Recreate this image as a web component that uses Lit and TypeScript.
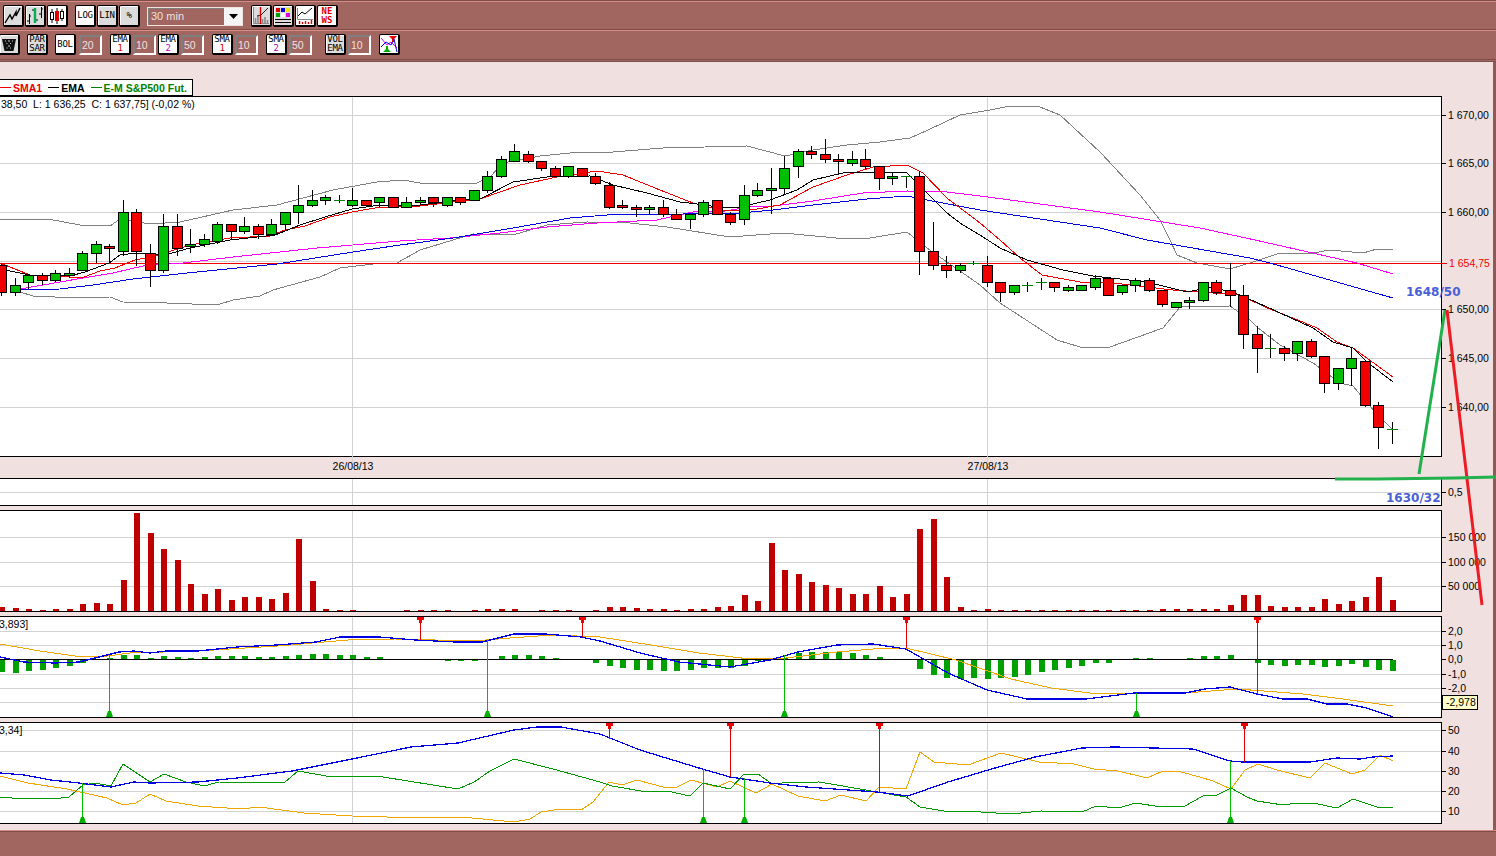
import { LitElement, html, svg, css } from "lit";
import { customElement } from "lit/decorators.js";

type Candle = [number, number, number, number, "g" | "r"];

// body top, body bottom, wick top, wick bottom, colour (page pixels)
const CANDLES: Candle[] = [
  [265, 292, 263, 296, "r"], [285, 292, 278, 296, "g"], [275, 282, 275, 289, "g"], [275, 280, 273, 285, "r"],
  [273, 280, 270, 282, "g"], [273, 275, 268, 278, "g"], [253, 270, 251, 270, "g"], [244, 253, 241, 263, "g"],
  [246, 248, 244, 262, "r"], [212, 251, 200, 256, "g"], [212, 251, 209, 266, "r"], [253, 270, 244, 287, "r"],
  [226, 270, 214, 273, "g"], [226, 248, 214, 256, "r"], [244, 246, 229, 253, "g"], [239, 244, 234, 247, "g"],
  [224, 241, 222, 244, "g"], [224, 231, 224, 239, "r"], [226, 231, 217, 234, "g"], [226, 234, 224, 239, "r"],
  [224, 234, 219, 236, "g"], [212, 224, 212, 231, "g"], [205, 212, 185, 224, "g"], [200, 205, 190, 207, "g"],
  [197, 200, 195, 205, "g"], [200, 200, 195, 203, "g"], [200, 205, 188, 207, "g"], [200, 205, 200, 207, "r"],
  [197, 202, 197, 207, "g"], [197, 207, 197, 207, "r"], [202, 207, 197, 208, "g"], [200, 202, 197, 205, "g"],
  [197, 202, 197, 207, "r"], [197, 205, 197, 207, "g"], [197, 202, 197, 205, "r"], [190, 200, 190, 201, "g"],
  [176, 190, 171, 193, "g"], [159, 176, 156, 178, "g"], [151, 161, 144, 161, "g"], [154, 161, 151, 163, "r"],
  [161, 168, 161, 171, "r"], [168, 176, 166, 176, "r"], [166, 176, 166, 178, "g"], [168, 176, 168, 176, "r"],
  [176, 183, 173, 185, "r"], [185, 207, 182, 209, "r"], [205, 207, 200, 209, "r"], [207, 209, 205, 217, "r"],
  [207, 209, 205, 214, "g"], [207, 214, 200, 217, "r"], [214, 219, 209, 219, "r"], [214, 219, 214, 229, "g"],
  [202, 214, 200, 217, "g"], [200, 214, 200, 214, "r"], [214, 222, 212, 225, "r"], [195, 219, 185, 225, "g"],
  [190, 195, 183, 197, "g"], [188, 190, 168, 214, "g"], [168, 188, 156, 195, "g"], [151, 166, 149, 178, "g"],
  [151, 154, 146, 159, "r"], [154, 159, 139, 163, "r"], [159, 161, 154, 173, "r"], [159, 163, 151, 166, "g"],
  [159, 166, 149, 169, "r"], [166, 178, 166, 190, "r"], [176, 178, 172, 185, "g"], [176, 176, 176, 188, "g"],
  [176, 251, 171, 275, "r"], [251, 265, 222, 270, "r"], [265, 270, 256, 278, "r"], [265, 270, 263, 273, "g"],
  [263, 263, 261, 265, "g"], [265, 282, 256, 287, "r"], [282, 292, 282, 302, "r"], [285, 292, 285, 295, "g"],
  [285, 285, 282, 292, "g"], [282, 282, 278, 290, "g"], [282, 287, 282, 292, "r"], [287, 290, 285, 292, "g"],
  [285, 290, 285, 290, "g"], [278, 287, 275, 290, "g"], [278, 295, 278, 295, "r"], [285, 292, 285, 295, "g"],
  [280, 285, 278, 292, "g"], [280, 290, 278, 292, "r"], [290, 304, 290, 307, "r"], [302, 307, 302, 308, "g"],
  [300, 302, 297, 309, "g"], [282, 300, 282, 302, "g"], [282, 292, 280, 295, "r"], [290, 295, 263, 307, "r"],
  [295, 334, 285, 349, "r"], [334, 348, 326, 373, "r"], [348, 348, 334, 358, "g"], [348, 353, 346, 361, "r"],
  [341, 353, 341, 361, "g"], [341, 356, 339, 358, "r"], [356, 383, 356, 393, "r"], [368, 383, 368, 390, "g"],
  [358, 368, 348, 386, "g"], [361, 405, 361, 407, "r"], [405, 427, 402, 449, "r"], [429, 429, 422, 444, "g"],
];

const VOLUME = [
  4, 3, 2, 1, 2, 2, 7, 8, 7, 31, 98, 78, 62, 51, 27, 17, 22, 11, 14, 14, 12, 18, 72, 30, 2, 1, 1, 0, 0, 0,
  1, 1, 1, 1, 0, 1, 2, 2, 2, 0, 1, 1, 1, 0, 1, 4, 4, 3, 2, 2, 1, 2, 2, 4, 5, 16, 10, 68, 41, 37,
  29, 26, 23, 17, 17, 25, 14, 17, 82, 92, 34, 4, 1, 2, 1, 1, 1, 1, 1, 1, 1, 1, 1, 1, 1, 1, 2, 2, 2, 2,
  2, 6, 16, 16, 5, 4, 4, 4, 12, 7, 10, 14, 34, 11,
];

const MACD_HIST = [
  -12, -13, -11, -10, -8, -6, -3, 0, 1, 4, 4, 1, 3, 2, 1, 2, 3, 3, 3, 2, 2, 3, 4, 5, 5, 4, 4, 2, 2, 0,
  0, 0, 0, -1, -1, -1, 0, 3, 4, 4, 3, 1, 0, 0, -3, -6, -8, -10, -10, -11, -11, -10, -8, -8, -8, -6, -1, 0, 1, 6,
  7, 7, 7, 6, 4, 2, 0, 0, -9, -15, -18, -19, -18, -19, -18, -17, -15, -12, -10, -8, -6, -3, -3, 0, 1, 1, 0, 0, 1, 3,
  3, 4, 0, -3, -5, -6, -5, -5, -7, -6, -4, -7, -10, -11,
];

const BOLL_UP = [0,219,48,219,80,225,110,226,120,219,150,224,180,222,233,210,277,205,333,190,377,182,403,180,420,183,477,183,490,177,503,163,540,156,580,152,613,152,663,148,747,146,785,156,813,150,847,145,880,142,910,138,928,130,960,115,990,110,1010,106,1040,107,1060,115,1100,152,1140,195,1160,220,1170,240,1177,255,1197,263,1230,269,1253,262,1280,253,1313,253,1330,250,1363,253,1377,249,1393,249];
const BOLL_LOW = [20,292,33,296,77,298,110,297,123,302,167,303,217,305,233,300,260,296,273,290,320,277,340,268,373,264,397,263,420,250,453,240,473,234,513,235,547,225,587,222,630,223,667,227,730,237,783,233,847,239,870,238,907,232,927,248,980,285,1000,303,1057,340,1080,347,1110,347,1163,328,1180,307,1230,306,1250,320,1257,327,1280,345,1313,363,1340,383,1353,386,1367,403,1383,420,1393,430];
const MAGENTA = [20,289,43,285,83,278,113,273,143,266,183,263,233,257,317,248,400,241,450,238,500,233,547,227,597,223,657,220,693,212,725,211,750,207,773,206,813,201,863,193,907,191,947,192,980,196,1100,212,1200,228,1255,240,1357,263,1393,274];
const BLUE = [20,290,60,289,93,285,133,279,187,273,277,264,353,252,400,245,453,238,513,228,570,218,607,215,683,214,740,213,773,210,813,205,867,199,907,196,927,200,980,210,1100,228,1147,240,1250,258,1270,263,1393,298];
const SMA = [0,263,30,275,70,277,84,277,100,271,115,268,135,260,150,257,165,253,180,248,200,243,230,238,270,236,285,230,305,226,330,217,352,212,375,208,420,206,470,200,480,199,520,185,557,177,597,171,623,175,660,190,693,203,725,211,757,209,780,205,813,187,847,175,873,167,907,165,923,173,947,198,980,223,1000,240,1020,258,1042,275,1080,282,1113,283,1173,290,1240,295,1267,308,1293,318,1317,328,1337,342,1353,348,1393,377];
const EMA = [5,270,30,275,70,276,85,272,109,263,120,255,136,253,165,255,190,248,230,240,275,235,300,225,325,217,352,209,380,205,420,205,470,199,480,199,513,182,547,177,590,176,613,185,647,193,680,202,697,204,725,208,740,207,770,200,797,190,813,180,847,172,880,172,907,173,927,193,947,213,963,225,980,235,1000,248,1027,260,1063,270,1093,276,1147,282,1187,292,1213,287,1240,295,1267,307,1313,328,1333,342,1353,348,1367,362,1393,382];

const MACD_BLUE = [0,657,24,662,55,663,79,662,95,658,119,652,134,651,150,653,166,651,198,651,237,647,277,645,316,642,340,637,379,637,415,640,455,642,482,642,514,634,545,634,581,637,600,641,640,653,679,662,730,667,770,660,798,652,837,645,873,644,906,649,948,673,987,690,1027,699,1086,699,1134,693,1185,693,1205,689,1230,687,1257,694,1283,699,1307,699,1327,704,1347,704,1367,708,1393,717];
const MACD_ORANGE = [0,644,40,651,75,656,107,656,130,653,198,651,277,646,348,640,395,639,474,641,510,638,553,635,600,637,651,645,699,653,750,659,786,658,837,652,885,648,906,648,956,660,1011,679,1051,688,1090,693,1134,693,1185,693,1237,689,1277,692,1303,694,1343,699,1393,706];

const ADX_BLUE = [0,773,24,775,51,780,79,783,111,787,134,782,150,783,198,782,237,778,292,771,352,759,411,747,458,743,514,730,537,727,561,727,600,734,640,750,699,768,730,777,770,783,806,787,877,792,908,796,948,782,995,768,1035,757,1082,748,1114,747,1193,749,1230,761,1243,762,1310,762,1337,758,1360,759,1373,757,1393,756];
const ADX_GREEN = [0,797,12,798,61,798,69,797,83,785,95,783,111,786,123,764,150,782,164,774,186,782,204,786,219,782,253,783,285,782,298,771,332,777,352,776,383,777,458,789,474,782,490,771,514,759,553,769,600,782,612,786,647,792,667,791,690,796,703,783,730,789,744,774,758,774,772,784,782,783,819,782,837,785,877,792,906,797,920,807,944,811,966,811,1011,814,1041,811,1082,812,1096,806,1118,808,1136,803,1161,807,1185,806,1203,796,1217,795,1231,788,1247,797,1257,801,1283,805,1297,803,1313,803,1337,808,1353,799,1377,807,1393,808];
const ADX_ORANGE = [0,776,28,783,67,789,107,798,123,805,136,803,150,794,166,801,198,806,241,809,259,807,304,813,352,816,387,817,439,817,462,817,514,822,530,819,541,812,561,809,581,810,593,802,609,782,622,785,637,780,663,787,677,787,691,780,717,787,730,781,756,793,772,784,798,796,825,801,841,795,866,801,879,787,906,789,920,752,934,762,968,765,1001,753,1039,762,1074,764,1094,769,1118,771,1147,778,1163,771,1181,772,1200,777,1213,781,1231,789,1245,770,1258,764,1277,770,1310,778,1325,763,1352,774,1365,770,1380,755,1393,761];

const colX = (i: number) => Math.floor(1.8 + 13.5 * i);
const pts = (a: number[]) => {
  const out: string[] = [];
  for (let i = 0; i < a.length; i += 2) out.push(`${a[i]},${a[i + 1]}`);
  return out.join(" ");
};

const line = (a: number[], cls: string) => svg`<polyline class="ln ${cls}" points=${pts(a)}></polyline>`;

const frame = (top: number, bottom: number) => svg`
  <rect class="plot" x="-2" y=${top + 0.5} width="1443.5" height=${bottom - top}></rect>`;

const grid = (top: number, bottom: number, ys: number[]) => svg`
  ${ys.map((y) => svg`<line class="grid" x1="0" x2="1441" y1=${y + 0.5} y2=${y + 0.5}></line>`)}
  ${[352, 987].map((x) => svg`<line class="grid" x1=${x + 0.5} x2=${x + 0.5} y1=${top} y2=${bottom}></line>`)}`;

const ticks = (items: [number, string][], x = 1448) => svg`
  ${items.map(([y, t]) => svg`
    <line class="tick" x1="1442" x2="1446" y1=${y + 0.5} y2=${y + 0.5}></line>
    <text class="lbl" x=${x} y=${y + 4}>${t}</text>`)}`;

const sellMark = (x: number, top: number, to: number) => svg`
  <line class="sell" x1=${x + 0.5} x2=${x + 0.5} y1=${top} y2=${to}></line>
  <polygon class="sell-f" points="${x - 3},${top} ${x + 4},${top} ${x + 4},${top + 3} ${x + 2},${top + 3} ${x + 2},${top + 6} ${x - 1},${top + 6} ${x - 1},${top + 3} ${x - 3},${top + 3}"></polygon>`;

const buyMark = (x: number, bottom: number, to: number) => svg`
  <line class="buy" x1=${x + 0.5} x2=${x + 0.5} y1=${to} y2=${bottom}></line>
  <polygon class="buy-f" points="${x - 3},${bottom} ${x + 4},${bottom} ${x + 2},${bottom - 6} ${x - 1},${bottom - 6}"></polygon>`;

@customElement("app-root")
export class AppRoot extends LitElement {
  static styles = css`
    :host {
      display: block;
      position: relative;
      width: 1496px;
      height: 856px;
      overflow: hidden;
      background: #f0e0e0;
      font-family: "Liberation Sans", Arial, sans-serif;
    }

    .app {
      display: flex;
      flex-direction: column;
      height: 856px;
    }

    /* toolbars */
    .toolbar {
      background: #a1665f;
      border-top: 1px solid #7d4d48;
      box-shadow: inset 0 1px 0 #d98c85;
    }

    .row {
      display: flex;
      align-items: center;
      gap: 7px;
      box-sizing: border-box;
    }

    .row-a {
      height: 29px;
      padding: 4px 0 2px 3px;
      border-bottom: 1px solid #7d4d48;
    }

    .row-b {
      height: 32px;
      padding: 3px 0 4px 0;
      border-top: 1px solid #d98c85;
      border-bottom: 3px double #7d4d48;
      gap: 8px;
    }

    .group {
      display: flex;
      align-items: center;
      gap: 1px;
    }

    .pair {
      display: flex;
      align-items: center;
      gap: 2px;
    }

    .pair.wide {
      gap: 3px;
    }

    .pull-l {
      margin-left: -1px;
    }

    .pull-r {
      margin-right: -1px;
    }

    .push-l {
      margin-left: 5px;
    }

    .btn {
      display: flex;
      flex-direction: column;
      align-items: center;
      justify-content: center;
      box-sizing: border-box;
      width: 21px;
      height: 22px;
      border: 1px solid #000;
      border-right-width: 2px;
      border-bottom-width: 2px;
      border-radius: 2px;
      background: #dcdcdc;
      box-shadow: inset 1px 1px 0 #fff;
      font: 9px/9px "DejaVu Sans Mono", monospace;
      letter-spacing: -0.3px;
      color: #000;
    }

    .btn svg {
      display: block;
    }

    .row-b .btn {
      height: 21px;
    }

    .white {
      background: #fff;
    }

    .c-red {
      color: #e00000;
    }

    .c-pur {
      color: #b000c0;
    }

    .news {
      font-weight: bold;
      letter-spacing: 0;
      color: #e00000;
    }

    .field {
      box-sizing: border-box;
      width: 23px;
      height: 20px;
      padding: 1px 0 0 1px;
      border: 2px solid;
      border-color: #7f7f7f #fff #fff #7f7f7f;
      background: #a1665f;
      color: #f0e0e0;
      font-size: 10.5px;
      line-height: 15px;
    }

    .select {
      display: flex;
      box-sizing: border-box;
      width: 96px;
      height: 19px;
      margin-right: 1px;
      border: 1px solid #f0e0e0;
      background: #a1665f;
      color: #f0e0e0;
      font-size: 11px;
      line-height: 17px;
      box-shadow: inset 1px 1px 0 #7f7f7f;
    }

    .select span {
      flex: 1;
      padding-left: 3px;
    }

    .arrow {
      display: flex;
      align-items: center;
      justify-content: center;
      width: 18px;
      background: #f4f4f4;
    }

    /* chart area */
    .main {
      flex: 1;
      display: flex;
      flex-direction: column;
      box-sizing: border-box;
      padding-top: 17px;
      border-right: 3px solid #8f5a54;
    }

    .legend {
      display: flex;
      align-items: center;
      box-sizing: border-box;
      align-self: flex-start;
      width: 193px;
      height: 17px;
      border: 1px solid #000;
      border-left: 0;
      background: #fff;
      font-size: 10.5px;
      font-weight: bold;
      white-space: nowrap;
    }

    .legend i {
      display: block;
      flex: none;
      width: 11px;
      height: 1px;
      margin: 0 2px 0 0;
      background: currentColor;
    }

    .legend span {
      display: flex;
      align-items: center;
      margin-right: 6px;
    }

    .k-sma {
      color: #f00000;
    }

    .k-ema {
      color: #000;
    }

    .k-fut {
      color: #008000;
    }

    .stack {
      display: flex;
      flex-direction: column;
      gap: 4px;
    }

    svg.pane {
      display: block;
    }

    .plot {
      fill: #fff;
      stroke: #000;
      stroke-width: 1;
      shape-rendering: crispEdges;
    }

    .grid {
      stroke: #d2d2d2;
      stroke-width: 1;
      shape-rendering: crispEdges;
    }

    .tick {
      stroke: #000;
      shape-rendering: crispEdges;
    }

    .lbl {
      font-size: 10.5px;
      fill: #000;
    }

    .info {
      font-size: 10.5px;
      fill: #000;
      white-space: pre;
    }

    .ln {
      fill: none;
      stroke-width: 1;
      shape-rendering: crispEdges;
    }

    .thick {
      stroke-width: 1.25;
    }

    .l-gray {
      stroke: #808080;
    }

    .l-mag {
      stroke: #ff00ff;
    }

    .l-blue {
      stroke: #0000e0;
    }

    .l-red {
      stroke: #f00000;
    }

    .l-black {
      stroke: #000;
    }

    .l-orange {
      stroke: #f0a800;
    }

    .l-green {
      stroke: #009a00;
    }

    .wick {
      stroke: #000;
      shape-rendering: crispEdges;
    }

    .body {
      stroke: #000;
      shape-rendering: crispEdges;
    }

    .body.g {
      fill: #00be00;
    }

    .body.r {
      fill: #f00000;
    }

    .doji {
      stroke: #008000;
      shape-rendering: crispEdges;
    }

    .vol {
      fill: #c00000;
    }

    .hist {
      fill: #00a000;
    }

    .sell {
      stroke: #e00000;
      shape-rendering: crispEdges;
    }

    .sell-f {
      fill: #f00000;
    }

    .buy {
      stroke: #00c000;
      shape-rendering: crispEdges;
    }

    .buy-f {
      fill: #00b000;
    }

    .tip {
      fill: #ffffc8;
      stroke: #000;
      shape-rendering: crispEdges;
    }

    .price {
      fill: #f00000;
    }

    .footer {
      height: 26px;
      box-sizing: border-box;
      border-top: 1px solid #d98c85;
      box-shadow: inset 0 1px 0 #7d4d48;
      background: #a1665f;
    }

    /* hand-drawn trend marks lying over the chart */
    .overlay {
      position: absolute;
      left: 0;
      top: 0;
      pointer-events: none;
    }

    .mark {
      fill: none;
      stroke-width: 3;
    }

    .mark.up {
      stroke: #22b14c;
    }

    .mark.down {
      stroke: #ed1c24;
    }

    .note {
      font: bold 12px "DejaVu Sans", sans-serif;
      fill: #4a5fd6;
    }
  `;

  private renderToolbar() {
    return html`
      <div class="toolbar">
        <div class="row row-a">
          <div class="group">
            <div class="btn">
              <svg width="18" height="19" viewBox="0 0 18 19"><polyline points="1,17 6,9 8,13 12,6 12,10 16,2" fill="none" stroke="#000" stroke-width="1.4"></polyline></svg>
            </div>
            <div class="btn">
              <svg width="18" height="19" viewBox="0 0 18 19">
                <path d="M3.500 8v10M1 15h3M3 10h2M15.500 1v11M13 8h3M15 3h2M6 4h2M10 14h2" stroke="#000" fill="none"></path>
                <path d="M9 2v15" stroke="#00b050" stroke-width="2.400"></path>
              </svg>
            </div>
            <div class="btn white">
              <svg width="18" height="19" viewBox="0 0 18 19">
                <path d="M4 3v14M14 3v12" stroke="#000"></path>
                <rect x="2.500" y="6.500" width="3" height="7" fill="#fff" stroke="#000"></rect>
                <rect x="12.500" y="5.500" width="3" height="7" fill="#fff" stroke="#000"></rect>
                <path d="M9 2v16" stroke="#000"></path>
                <rect x="7" y="5" width="4" height="10" fill="#e00000"></rect>
              </svg>
            </div>
          </div>
          <div class="group">
            <div class="btn white">LOG</div>
            <div class="btn">LIN</div>
            <div class="btn">%</div>
          </div>
          <div class="select">
            <span>30 min</span>
            <div class="arrow">
              <svg width="9" height="5" viewBox="0 0 9 5"><path d="M0 0h9L4.500 5z" fill="#000"></path></svg>
            </div>
          </div>
          <div class="group">
            <div class="btn">
              <svg width="18" height="19" viewBox="0 0 18 19">
                <path d="M1.500 1v16.500H17" stroke="#8a8a8a" fill="none"></path>
                <path d="M3.500 17v-5M6 17v-7M10.500 17v-4M13 17v-6M15.500 17v-3" stroke="#8a8a8a" stroke-width="1.600"></path>
                <path d="M5 10l4-1 3-3 4-4" stroke="#222" fill="none"></path>
                <path d="M8.500 1v17" stroke="#e00000" stroke-width="1.400"></path>
              </svg>
            </div>
            <div class="btn">
              <svg width="18" height="19" viewBox="0 0 18 19">
                <rect x="2" y="2" width="4" height="4" fill="#e00000"></rect>
                <rect x="7" y="2" width="4" height="4" fill="#0000e0"></rect>
                <rect x="12" y="2" width="4" height="4" fill="#f0e000"></rect>
                <rect x="2" y="7" width="4" height="4" fill="#00a000"></rect>
                <rect x="7" y="7" width="4" height="4" fill="#fff"></rect>
                <rect x="12" y="7" width="4" height="4" fill="#e000e0"></rect>
                <path d="M1 13.500h16M1 16.500h16" stroke="#000"></path>
              </svg>
            </div>
            <div class="btn white">
              <svg width="18" height="19" viewBox="0 0 18 19">
                <path d="M1.500 2v11.500H17" stroke="#888" fill="none"></path>
                <path d="M2 10l4-4 3 2 7-6" stroke="#000" fill="none"></path>
                <path d="M3.500 18v-3M6.500 18v-2M9.500 18v-3M12.500 18v-2M15.500 18v-4" stroke="#e00000" stroke-width="1.400"></path>
              </svg>
            </div>
            <div class="btn white news"><span>NE</span><span>WS</span></div>
          </div>
        </div>
        <div class="row row-b">
          <div class="btn pull-l pull-r">
            <svg width="18" height="18" viewBox="0 0 18 18">
              <path d="M2 4h14l-2.500 12h-9z" fill="#111"></path>
              <path d="M5 6h1M8 6h2M12 6h1M6.500 8.500h1M10 8.500h1M8 11h2M6.500 13h1M10 13h1" stroke="#ccc"></path>
            </svg>
          </div>
          <div class="btn pull-r"><span>PAR</span><span>SAR</span></div>
          <div class="pair wide">
            <div class="btn white">BOL</div>
            <div class="field">20</div>
          </div>
          <div class="pair">
            <div class="btn white"><span>EMA</span><span class="c-red">1</span></div>
            <div class="field">10</div>
            <div class="btn white"><span>EMA</span><span class="c-pur">2</span></div>
            <div class="field">50</div>
          </div>
          <div class="pair">
            <div class="btn white"><span>SMA</span><span class="c-red">1</span></div>
            <div class="field">10</div>
          </div>
          <div class="pair">
            <div class="btn white"><span>SMA</span><span class="c-pur">2</span></div>
            <div class="field">50</div>
          </div>
          <div class="pair push-l">
            <div class="btn"><span>VOL</span><span>EMA</span></div>
            <div class="field">10</div>
          </div>
          <div class="btn white">
            <svg width="18" height="18" viewBox="0 0 18 18">
              <path d="M1 3l6 7 4-3 6 6" stroke="#e000e0" fill="none"></path>
              <path d="M1 12l5-5 5 3 3-6 3 13" stroke="#0000e0" fill="none"></path>
              <path d="M9 1h8l-3 3v3h-2V4z" fill="#e00000"></path>
              <path d="M3 17l3-3V11h2v3l3 3z" fill="#00b000"></path>
            </svg>
          </div>
        </div>
      </div>
    `;
  }

  private renderLegend() {
    return html`
      <div class="legend">
        <span class="k-sma"><i></i>SMA1</span>
        <span class="k-ema"><i></i>EMA</span>
        <span class="k-fut"><i></i>E-M S&amp;P500 Fut.</span>
      </div>
    `;
  }

  private renderCandles() {
    return CANDLES.map(([bt, bb, wt, wb, c], i) => {
      const x = colX(i);
      const wick = svg`<line class="wick" x1=${x + 0.5} x2=${x + 0.5} y1=${wt} y2=${wb}></line>`;
      if (bt === bb) {
        return svg`${wick}<line class="doji" x1=${x - 5} x2=${x + 6} y1=${bt + 0.5} y2=${bt + 0.5}></line>`;
      }
      return svg`${wick}<rect class="body ${c}" x=${x - 5 + 0.5} y=${bt + 0.5} width="10" height=${bb - bt}></rect>`;
    });
  }

  private renderPrice() {
    return html`
      <svg class="pane" width="1493" height="382" viewBox="0 96 1493 382">
        ${frame(96, 456)}
        ${grid(97, 456, [115, 163, 212, 261, 309, 358, 407])}
        <line class="grid" x1="352.500" x2="352.500" y1="456" y2="462"></line>
        <line class="grid" x1="987.500" x2="987.500" y1="456" y2="462"></line>
        ${line(BOLL_UP, "l-gray")} ${line(BOLL_LOW, "l-gray")}
        <line class="ln l-red" x1="0" x2="1447" y1="263.500" y2="263.500"></line>
        ${line(MAGENTA, "l-mag")} ${line(BLUE, "l-blue")}
        ${line(SMA, "l-red")} ${line(EMA, "l-black")}
        ${this.renderCandles()}
        <text class="info" x="1" y="108">38,50  L: 1 636,25  C: 1 637,75] (-0,02 %)</text>
        ${ticks([[115, "1 670,00"], [163, "1 665,00"], [212, "1 660,00"], [309, "1 650,00"], [358, "1 645,00"], [407, "1 640,00"]])}
        <text class="lbl price" x="1449" y="267">1 654,75</text>
        <text class="lbl" x="353" y="470" text-anchor="middle">26/08/13</text>
        <text class="lbl" x="988" y="470" text-anchor="middle">27/08/13</text>
      </svg>
    `;
  }

  private renderStrip() {
    return html`
      <svg class="pane" width="1493" height="28" viewBox="0 478 1493 28">
        ${frame(478, 505)}
        ${grid(479, 505, [492])}
        ${ticks([[492, "0,5"]])}
      </svg>
    `;
  }

  private renderVolume() {
    return html`
      <svg class="pane" width="1493" height="102" viewBox="0 510 1493 102">
        ${frame(510, 611)}
        ${grid(511, 611, [537, 562, 586])}
        ${VOLUME.map((v, i) => (v ? svg`<rect class="vol" x=${colX(i) - 2} y=${611 - v} width="6" height=${v}></rect>` : ""))}
        ${ticks([[537, "150 000"], [562, "100 000"], [586, "50 000"]])}
      </svg>
    `;
  }

  private renderMacd() {
    return html`
      <svg class="pane" width="1493" height="102" viewBox="0 616 1493 102">
        ${frame(616, 717)}
        ${grid(617, 717, [631, 645, 674, 688, 702])}
        ${MACD_HIST.map((v, i) =>
          v ? svg`<rect class="hist" x=${colX(i) - 2} y=${v > 0 ? 659 - v : 660} width="6" height=${Math.abs(v)}></rect>` : ""
        )}
        <line class="tick" x1="0" x2="1393" y1="659.500" y2="659.500"></line>
        ${line(MACD_ORANGE, "l-orange")} ${line(MACD_BLUE, "l-blue thick")}
        ${sellMark(420, 617, 640)} ${sellMark(582, 617, 637)} ${sellMark(906, 617, 648)} ${sellMark(1257, 617, 694)}
        ${buyMark(109, 717, 655)} ${buyMark(487, 717, 640)} ${buyMark(784, 717, 655)} ${buyMark(1136, 717, 693)}
        <text class="info" x="-1" y="628">3,893]</text>
        ${ticks([[631, "2,0"], [645, "1,0"], [659, "0,0"], [674, "-1,0"], [688, "-2,0"]])}
        <rect class="tip" x="1442.500" y="695.500" width="35" height="14"></rect>
        <text class="lbl" x="1446" y="706">-2,978</text>
      </svg>
    `;
  }

  private renderAdx() {
    return html`
      <svg class="pane" width="1493" height="102" viewBox="0 722 1493 102">
        ${frame(722, 823)}
        ${grid(723, 823, [730, 751, 771, 791, 811])}
        ${line(ADX_ORANGE, "l-orange")} ${line(ADX_GREEN, "l-green")} ${line(ADX_BLUE, "l-blue thick")}
        ${sellMark(609, 723, 739)} ${sellMark(730, 723, 777)} ${sellMark(879, 723, 792)} ${sellMark(1244, 723, 762)}
        ${buyMark(82, 823, 783)} ${buyMark(703, 823, 769)} ${buyMark(744, 823, 778)} ${buyMark(1230, 823, 761)}
        <text class="info" x="-1" y="734">3,34]</text>
        ${ticks([[730, "50"], [751, "40"], [771, "30"], [791, "20"], [811, "10"]])}
      </svg>
    `;
  }

  render() {
    return html`
      <div class="app">
        ${this.renderToolbar()}
        <div class="main">
          ${this.renderLegend()}
          <div class="stack">
            <div>${this.renderPrice()} ${this.renderStrip()}</div>
            ${this.renderVolume()} ${this.renderMacd()} ${this.renderAdx()}
          </div>
        </div>
        <div class="footer"></div>
      </div>
      <svg class="overlay" width="1496" height="856" viewBox="0 0 1496 856">
        <polyline class="mark up" points="1419,474 1445,310"></polyline>
        <polyline class="mark down" points="1447,310 1482,605"></polyline>
        <polyline class="mark up" points="1335,479 1377,479 1455,478 1496,477"></polyline>
        <text class="note" x="1406" y="296">1648/50</text>
        <text class="note" x="1386" y="502">1630/32</text>
      </svg>
    `;
  }
}
